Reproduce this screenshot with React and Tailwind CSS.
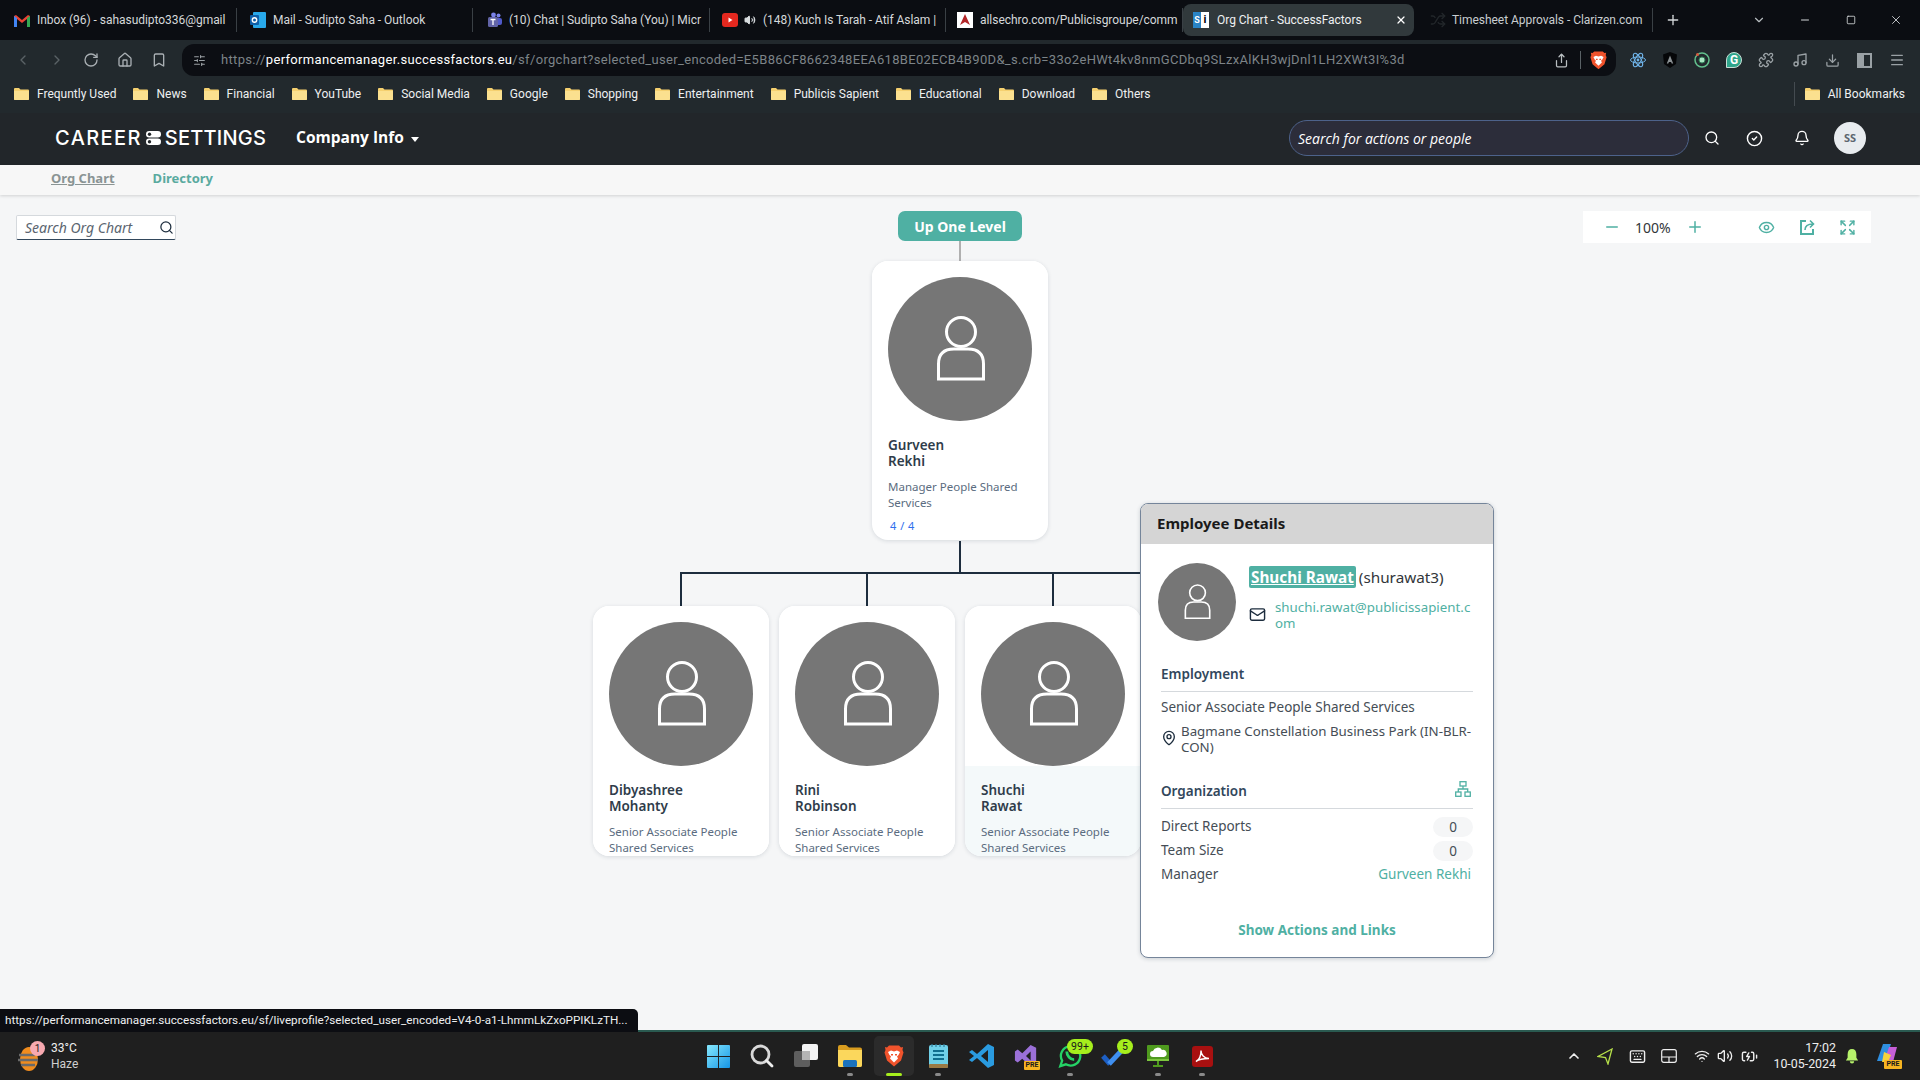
import {
  ChevronLeft, ChevronRight, RotateCw, Home, Bookmark, SlidersHorizontal, Share, Search, CircleCheck, Bell,
  Minus, Plus, Eye, Expand, Mail, MapPin, X, Square, ChevronDown, ChevronUp, Volume2,
  Puzzle, Music, Download, Menu, Keyboard, Wifi, BatteryCharging, Shuffle,
} from "lucide-react";

const chromeFont = { fontFamily: 'Roboto, sans-serif' };

function Folder() {
  return (
    <svg width="15" height="13" viewBox="0 0 15 13" className="shrink-0">
      <path d="M0 2a1 1 0 0 1 1-1h4l1.5 1.5H14a1 1 0 0 1 1 1V12a1 1 0 0 1-1 1H1a1 1 0 0 1-1-1z" fill="#f5d06f" />
      <path d="M0 4h15v8a1 1 0 0 1-1 1H1a1 1 0 0 1-1-1z" fill="#fbe08f" />
    </svg>
  );
}

function BraveLion({ size = 20 }) {
  return (
    <svg width={size} height={size * 1.1} viewBox="0 0 20 22">
      <path d="M5 0.5h10l2 2 2-.5-.5 3 1 2.5-2.5 8-7 6-7-6-2.5-8 1-2.5-.5-3 2 .5z" fill="#f0532c" />
      <path d="M4 7l3-1.5 3 1 3-1 3 1.5-1.5 3-1.5 1.5 1 2-4 4-4-4 1-2-1.5-1.5z" fill="#fff" />
      <path d="M7 9h2v1.5H7zM11 9h2v1.5h-2z" fill="#f0532c" />
    </svg>
  );
}

const tabs = [
  {
    w: "w-[236px]", title: "Inbox (96) - sahasudipto336@gmail", text: "w-[190px]", pad: "pl-[13px]",
    icon: (
      <svg width="16" height="13" viewBox="0 0 16 13">
        <path d="M0 2v11h3V5l5 4 5-4v8h3V2l-2-1-6 5-6-5z" fill="#ea4335" />
        <path d="M13 13h3V2l-3 2z" fill="#34a853" />
        <path d="M0 13h3V4L0 2z" fill="#4285f4" />
      </svg>
    ),
  },
  {
    w: "w-[236px]", title: "Mail - Sudipto Saha - Outlook", text: "w-[190px]", pad: "pl-[13px]",
    icon: (
      <svg width="16" height="16" viewBox="0 0 16 16">
        <rect x="3" width="13" height="16" rx="1" fill="#28a8ea" />
        <rect y="3" width="9" height="10" rx="1" fill="#0f5fa8" />
        <circle cx="4.5" cy="8" r="2.2" fill="none" stroke="#fff" strokeWidth="1.4" />
      </svg>
    ),
  },
  {
    w: "w-[237px]", title: "(10) Chat | Sudipto Saha (You) | Micr", text: "w-[190px]", pad: "pl-[13px]",
    icon: (
      <svg width="16" height="16" viewBox="0 0 16 16">
        <circle cx="12.5" cy="3.5" r="2" fill="#7b83eb" />
        <circle cx="7.5" cy="3" r="2.4" fill="#7b83eb" />
        <rect x="9" y="6" width="7" height="7" rx="2" fill="#5059c9" />
        <rect x="2" y="5" width="10" height="10" rx="1.5" fill="#6264a7" />
        <path d="M4.5 7.5h5M7 7.5V13" stroke="#fff" strokeWidth="1.3" />
      </svg>
    ),
  },
  {
    w: "w-[236px]", title: "(148) Kuch Is Tarah - Atif Aslam |", text: "w-[176px]", pad: "pl-[12px]", speaker: true,
    icon: (
      <svg width="16" height="14" viewBox="0 0 16 14">
        <rect width="16" height="14" rx="3" fill="#e5281f" />
        <path d="M6.5 4.5v5l4-2.5z" fill="#fff" />
      </svg>
    ),
  },
  {
    w: "w-[237px]", title: "allsechro.com/Publicisgroupe/comm", text: "w-[190px]", pad: "pl-[11px]",
    icon: (
      <svg width="16" height="16" viewBox="0 0 16 16">
        <rect width="16" height="16" fill="#fff" />
        <path d="M8 2l5 11-5-3-5 3z" fill="#b3262a" />
      </svg>
    ),
  },
];

function Tab({ tab }) {
  return (
    <div className={`${tab.w} ${tab.pad} h-[24px] flex items-center gap-[7px] border-r border-[#3a4045]`}>
      <div className="w-[16px] h-[16px] flex items-center justify-center shrink-0">{tab.icon}</div>
      {tab.speaker && <Volume2 size={12} fill="#d8dcdf" className="text-[#d8dcdf] shrink-0 ml-[-1px]" />}
      <div className={`${tab.text} whitespace-nowrap text-[12px] tracking-[-0.04px] text-[#d5d8da]`}>{tab.title}</div>
    </div>
  );
}

function TabStrip() {
  return (
    <div className="h-[40px] bg-[#0b0d12] flex items-center pl-[1px]" style={chromeFont}>
      {tabs.map((t) => (
        <Tab key={t.title} tab={t} />
      ))}
      <div className="w-[231px] h-[32px] rounded-[8px] bg-[#31393c] flex items-center pl-[10px] pr-[7px] gap-[8px] shrink-0">
        <div className="w-[16px] h-[16px] bg-white flex shrink-0">
          <div className="w-[8px] bg-[#2a84c6] text-[9px] font-bold leading-[16px] text-white text-center">S</div>
          <div className="w-[8px] text-[11px] font-bold leading-[15px] text-black text-center">i</div>
        </div>
        <div className="flex-1 whitespace-nowrap text-[12px] tracking-[-0.04px] text-[#eef0f1]">Org Chart - SuccessFactors</div>
        <X size={12} strokeWidth={2.5} className="text-white" />
      </div>
      <div className="w-[239px] h-[24px] flex items-center pl-[16px] gap-[6px] border-r border-[#3a4045]">
        <Shuffle size={16} className="text-[#23272b]" />
        <div className="text-[12px] tracking-[-0.04px] whitespace-nowrap text-[#c9cdd0]">Timesheet Approvals - Clarizen.com</div>
      </div>
      <Plus size={16} className="text-[#d5d8da] ml-[12px]" />
      <ChevronDown size={14} className="text-[#b9bec1] ml-[71px]" />
      <Minus size={12} className="text-[#d5d8da] ml-[33px]" />
      <Square size={10} className="text-[#d5d8da] ml-[35px]" />
      <X size={14} strokeWidth={1.5} className="text-[#d5d8da] ml-[33px]" />
    </div>
  );
}

function Toolbar() {
  return (
    <div className="h-[38px] bg-[#22292d] flex items-start pt-[4px] pl-[15px]" style={chromeFont}>
      <div className="flex items-center h-[32px] gap-[18px] w-[167px] text-[#a9afb3]">
        <ChevronLeft size={16} className="text-[#5a6266]" />
        <ChevronRight size={16} className="text-[#5a6266]" />
        <RotateCw size={16} />
        <Home size={16} />
        <Bookmark size={16} />
      </div>
      <div className="w-[1434px] h-[32px] rounded-[12px] bg-[#0c0e13] flex items-center pl-[11px] pr-[9px] text-[#7d8488]">
        <SlidersHorizontal size={13} className="text-[#9aa0a4]" />
        <div className="ml-[15px] text-[13px] tracking-[0.33px] whitespace-nowrap flex-1">
          https://<span className="text-white">performancemanager.successfactors.eu</span>
          /sf/orgchart?selected_user_encoded=E5B86CF8662348EEA618BE02ECB4B90D&amp;_s.crb=33o2eHWt4kv8nmGCDbq9SLzxAlKH3wjDnl1LH2XWt3I%3d
        </div>
        <Share size={15} className="text-[#b9bec1] mr-[2px]" />
        <div className="w-px h-[18px] bg-[#5a6266] mx-[9px]" />
        <BraveLion size={17} />
      </div>
      <div className="flex items-center h-[32px] gap-[16px] ml-[14px] text-[#9aa1a5]">
        <svg width="16" height="16" viewBox="-8 -8 16 16" fill="none" stroke="#6fb3e8" strokeWidth="1">
          <ellipse rx="7.5" ry="3" />
          <ellipse rx="7.5" ry="3" transform="rotate(60)" />
          <ellipse rx="7.5" ry="3" transform="rotate(120)" />
          <circle r="1.4" fill="#6fb3e8" stroke="none" />
        </svg>
        <svg width="16" height="16" viewBox="0 0 16 16">
          <path d="M8 0l7 2.5-1 9.5-6 4-6-4-1-9.5z" fill="#050608" />
          <path d="M8 3.5l-3.2 8h1.5l.6-1.6h2.2l.6 1.6h1.5z" fill="#8c9295" />
        </svg>
        <svg width="16" height="16" viewBox="0 0 16 16" fill="none">
          <circle cx="8" cy="8" r="7" stroke="#62c08d" strokeWidth="1.5" />
          <circle cx="8" cy="8" r="3" fill="#a8e4c2" stroke="#2f7d55" />
          <circle cx="3.5" cy="2.5" r="1.5" fill="#d9583c" />
        </svg>
        <div className="w-[16px] h-[16px] rounded-full rounded-bl-[2px] bg-[#2fa58b] border border-[#c8ded6] text-white text-[12px] font-bold leading-[14px] text-center">G</div>
        <Puzzle size={16} />
        <Music size={16} className="ml-[2px]" />
        <Download size={15} className="ml-[1px]" />
        <div className="w-[15px] h-[15px] ml-[1px] border-2 border-[#9aa1a5] flex">
          <div className="w-[5px] bg-[#9aa1a5]" />
        </div>
        <Menu size={16} className="ml-[1px]" />
      </div>
    </div>
  );
}

const bookmarks = ["Frequntly Used", "News", "Financial", "YouTube", "Social Media", "Google", "Shopping", "Entertainment", "Publicis Sapient", "Educational", "Download", "Others"];

function BookmarksBar() {
  return (
    <div className="h-[35px] bg-[#22292d] flex items-center pl-[14px] pr-[15px] pb-[4px] justify-between" style={chromeFont}>
      <div className="flex items-center gap-[17px]">
        {bookmarks.map((b) => (
          <div key={b} className="flex items-center gap-[8px] text-[12px] text-[#eef0f1] whitespace-nowrap">
            <Folder />
            {b}
          </div>
        ))}
      </div>
      <div className="flex items-center gap-[8px] text-[12px] text-[#eef0f1] border-l border-[#444b50] pl-[10px] h-[24px]">
        <Folder />
        All Bookmarks
      </div>
    </div>
  );
}

function AppHeader() {
  return (
    <div className="h-[52px] bg-[#22262a] flex items-center pb-[2px] text-white" style={{ fontFamily: '"Open Sans", sans-serif' }}>
      <div className="ml-[55px] flex items-center text-[20px] font-medium leading-none" style={{ fontFamily: "Inter, sans-serif" }}>
        <span className="tracking-[1.4px]">CAREER</span>
        <svg width="15" height="14" viewBox="0 0 15 14" className="mx-[4px]">
          <rect width="15" height="6.5" rx="3.25" fill="#fff" />
          <rect y="7.5" width="15" height="6.5" rx="3.25" fill="#fff" />
          <circle cx="3.5" cy="3.25" r="1.7" fill="#22262a" />
          <circle cx="3.5" cy="10.75" r="1.7" fill="#22262a" />
        </svg>
        <span className="tracking-[0.2px]">SETTINGS</span>
      </div>
      <div className="ml-[30px] flex items-center gap-[7px] text-[15.5px] font-bold">
        Company Info
        <div className="w-0 h-0 border-x-[4px] border-x-transparent border-t-[5px] border-t-white mt-[2px]" />
      </div>
      <div className="ml-auto w-[400px] h-[36px] rounded-full bg-[#2c2d3a] border border-[#4d628a] flex items-center pl-[8px] text-[14px] italic">
        Search for actions or people
      </div>
      <Search size={16} className="ml-[15px]" />
      <CircleCheck size={17} className="ml-[26px]" />
      <Bell size={16} fill="none" className="ml-[31px]" />
      <div className="ml-[24px] mr-[54px] w-[32px] h-[32px] rounded-full bg-[#e8ecef] text-[#5c6670] text-[11px] font-bold flex items-center justify-center">
        SS
      </div>
    </div>
  );
}

function PersonAvatar({ className }) {
  return (
    <svg viewBox="0 0 144 144" className={className}>
      <circle cx="72" cy="72" r="72" fill="#767676" />
      <circle cx="73" cy="55" r="14.5" fill="none" stroke="#fff" strokeWidth="3" />
      <path d="M50.5 102 V87 Q50.5 72 66 72 H80 Q95.5 72 95.5 87 V102 Z" fill="none" stroke="#fff" strokeWidth="3" />
    </svg>
  );
}

function OrgCard({ first, last, title, position, count, selected }) {
  return (
    <div className={`absolute ${position} w-[176px] rounded-[16px] bg-white shadow-[0_1px_4px_rgba(30,50,70,0.14)] overflow-hidden`}>
      <div className="px-[16px] pt-[16px] bg-white">
        <PersonAvatar className="w-[144px] h-[144px] block" />
      </div>
      <div className={`px-[16px] pt-[16px] h-[90px] ${selected ? "bg-[#f4f9fa]" : "bg-white"}`}>
        <div className="text-[13.5px] font-semibold leading-[16px] text-[#2f3c4a]">
          {first}
          <br />
          {last}
        </div>
        <div className="mt-[10px] text-[11.5px] leading-[16px] text-[#5b6c80]">{title}</div>
      </div>
      {count && <div className="px-[18px] pb-[6px] pt-[7px] text-[11px] leading-[16px] text-[#2f6fed] tracking-[0.5px]">{count}</div>}
    </div>
  );
}

function EmployeePopover() {
  return (
    <div className="absolute left-[1140px] top-[308px] w-[354px] h-[455px] rounded-[8px] bg-white border border-[#75859a] shadow-[0_1px_4px_rgba(30,50,70,0.2)] overflow-hidden">
      <div className="h-[40px] bg-[#d5d5d5] pl-[16px] pb-[2px] flex items-center text-[15px] font-bold text-[#1a1a1a]">Employee Details</div>
      <div className="flex pt-[19px] pl-[17px]">
        <PersonAvatar className="w-[78px] h-[78px] shrink-0" />
        <div className="ml-[13px] w-[225px]">
          <div className="flex items-center h-[22px] mt-[3px] whitespace-nowrap text-[15.3px] text-[#32363a]">
            <span className="bg-[#4fb0a3] text-white font-bold underline px-[2px] rounded-[2px] leading-[22px]">Shuchi Rawat</span>
            <span className="ml-[3px]">(shurawat3)</span>
          </div>
          <div className="flex mt-[11px]">
            <Mail size={17} className="text-[#1d2d3e] shrink-0 mt-[7px]" />
            <div className="ml-[9px] w-[196px] break-all text-[13.3px] leading-[16px] text-[#4fb0a3]">shuchi.rawat@publicissapient.com</div>
          </div>
        </div>
      </div>
      <div className="px-[20px] text-[13.5px] text-[#454d55]">
        <div className="mt-[23px] pb-[7px] border-b border-[#d5d9dd] font-semibold text-[#32475c]">Employment</div>
        <div className="mt-[6px] leading-[18px]">Senior Associate People Shared Services</div>
        <div className="flex mt-[7px] leading-[16px]">
          <MapPin size={16} className="text-[#1d2d3e] shrink-0 mt-[7px]" />
          <div className="ml-[4px] mr-[-3px] text-[13.3px]">Bagmane Constellation Business Park (IN-BLR-CON)</div>
        </div>
        <div className="mt-[26px] pb-[6px] border-b border-[#d5d9dd] font-semibold text-[#32475c] flex items-center justify-between">
          Organization
          <svg width="16" height="16" viewBox="0 0 16 16" fill="none" stroke="#4fb0a3" strokeWidth="1.3" className="mr-[2px] mt-[-4px]">
            <rect x="5" y="0.7" width="6" height="4.3" />
            <rect x="0.7" y="11" width="5.3" height="4.3" />
            <rect x="10" y="11" width="5.3" height="4.3" />
            <path d="M8 5v3M3.3 11V8h9.4v3" />
          </svg>
        </div>
        <div className="mt-[8px] flex items-center justify-between h-[20px]">
          Direct Reports
          <span className="w-[40px] h-[20px] rounded-full bg-[#f5f6f7] text-center leading-[20px]">0</span>
        </div>
        <div className="mt-[4px] flex items-center justify-between h-[20px]">
          Team Size
          <span className="w-[40px] h-[20px] rounded-full bg-[#f5f6f7] text-center leading-[20px]">0</span>
        </div>
        <div className="mt-[4px] flex items-center justify-between h-[20px]">
          Manager
          <span className="text-[#4fb0a3] mr-[2px]">Gurveen Rekhi</span>
        </div>
        <div className="mt-[35px] text-center font-bold text-[#4fb0a3]">Show Actions and Links</div>
      </div>
    </div>
  );
}

function OrgChart() {
  return (
    <div className="relative flex-1 bg-[#f5f6f7]" style={{ fontFamily: '"Noto Sans", sans-serif' }}>
      <div className="flex items-start justify-between pl-[16px] pr-[49px] pt-[16px]">
        <div className="mt-[4px] w-[160px] h-[25px] bg-white border border-[#d5d9dd] border-b-[#32475c] rounded-[2px] flex items-center justify-between pl-[8px] pr-[1px] italic text-[14px] text-[#5b6570]">
          Search Org Chart
          <Search size={15} className="text-[#1d2d3e]" />
        </div>
        <div className="w-[288px] h-[32px] bg-white flex items-center text-[#4fb0a3]">
          <Minus size={18} strokeWidth={2} className="ml-[20px]" />
          <span className="ml-[14px] text-[14px] text-[#32363a]">100%</span>
          <Plus size={18} strokeWidth={2} className="ml-[15px]" />
          <Eye size={17} className="ml-[54px]" />
          <svg width="16" height="16" viewBox="0 0 16 16" fill="none" stroke="#4fb0a3" strokeWidth="2" className="ml-[24px]">
            <path d="M7 2H2v13h12v-5" />
            <path d="M6 11c0-4 2-6 8-6M11 1.5l3.5 3.5L11 8.5" strokeWidth="1.6" />
          </svg>
          <Expand size={17} className="ml-[24px]" />
        </div>
      </div>

      <div className="absolute left-[898px] top-[16px] w-[124px] h-[30px] rounded-[7px] bg-[#4fb0a3] text-white text-[14px] font-bold flex items-center justify-center">
        Up One Level
      </div>
      <div className="absolute left-[959px] top-[46px] w-[2px] h-[20px] bg-[#b0b0b0]" />
      <OrgCard first="Gurveen" last="Rekhi" title="Manager People Shared Services" position="left-[872px] top-[66px]" count="4 / 4" />

      <div className="absolute left-[959px] top-[346px] w-[2px] h-[32px] bg-[#1d2d3e]" />
      <div className="absolute left-[680px] top-[377px] w-[460px] h-[2px] bg-[#1d2d3e]" />
      <div className="absolute left-[680px] top-[377px] w-[2px] h-[34px] bg-[#1d2d3e]" />
      <div className="absolute left-[866px] top-[377px] w-[2px] h-[34px] bg-[#1d2d3e]" />
      <div className="absolute left-[1052px] top-[377px] w-[2px] h-[34px] bg-[#1d2d3e]" />

      <OrgCard first="Dibyashree" last="Mohanty" title="Senior Associate People Shared Services" position="left-[593px] top-[411px]" />
      <OrgCard first="Rini" last="Robinson" title="Senior Associate People Shared Services" position="left-[779px] top-[411px]" />
      <OrgCard first="Shuchi" last="Rawat" title="Senior Associate People Shared Services" position="left-[965px] top-[411px]" selected />

      <EmployeePopover />

      <div className="absolute left-0 bottom-[-2px] w-[638px] h-[23px] bg-[#0c0d12] rounded-tr-[5px] pl-[5px] flex items-center text-[11.7px] text-[#eef0f1] whitespace-nowrap" style={chromeFont}>
        https://performancemanager.successfactors.eu/sf/liveprofile?selected_user_encoded=V4-0-a1-LhmmLkZxoPPIKLzTH...
      </div>
    </div>
  );
}

function Dot({ color = "bg-[#8a8a8a]", wide }) {
  return <div className={`absolute bottom-[2px] left-1/2 -translate-x-1/2 rounded-full h-[3px] ${wide ? "w-[16px]" : "w-[6px]"} ${color}`} />;
}

function Badge({ children, wide }) {
  return (
    <div className={`absolute top-[5px] ${wide ? "right-[-1px] w-[26px]" : "right-[3px] w-[16px]"} h-[15px] rounded-[8px] bg-[#a6ee1d] text-[#1a1a1a] text-[10.5px] leading-[15px] text-center`}>
      {children}
    </div>
  );
}

const dockIcons = [
  {
    name: "start",
    el: (
      <svg width="23" height="23" viewBox="0 0 24 24">
        <defs>
          <linearGradient id="winBlue" x1="0" y1="0" x2="1" y2="1">
            <stop offset="0" stopColor="#86e8fd" />
            <stop offset="1" stopColor="#1595e6" />
          </linearGradient>
        </defs>
        <path d="M1 0h10.5v11.5H0V1a1 1 0 0 1 1-1zM12.5 0H23a1 1 0 0 1 1 1v10.5H12.5zM0 12.5h11.5V24H1a1 1 0 0 1-1-1zM12.5 12.5H24V23a1 1 0 0 1-1 1H12.5z" fill="url(#winBlue)" />
      </svg>
    ),
  },
  {
    name: "search",
    el: (
      <svg width="24" height="24" viewBox="0 0 24 24" fill="none">
        <circle cx="10.5" cy="10.5" r="8.5" stroke="#d8d8d8" strokeWidth="2.8" />
        <path d="M16.5 16.5L22 22" stroke="#eeeeee" strokeWidth="2.8" strokeLinecap="round" />
      </svg>
    ),
  },
  {
    name: "tasks",
    el: (
      <svg width="24" height="24" viewBox="0 0 24 24">
        <rect x="8" y="0" width="16" height="16" rx="2" fill="#f4f4f4" />
        <rect x="0" y="7" width="16" height="16" rx="2" fill="#5e5e5e" />
        <rect x="8" y="7" width="8" height="9" fill="#b5b5b5" />
      </svg>
    ),
  },
  {
    name: "files", dot: true,
    el: (
      <svg width="24" height="22" viewBox="0 0 24 22">
        <path d="M0 2a2 2 0 0 1 2-2h6l3 2.5h11a2 2 0 0 1 2 2V20a2 2 0 0 1-2 2H2a2 2 0 0 1-2-2z" fill="#d99d1f" />
        <path d="M0 5h24v15a2 2 0 0 1-2 2H2a2 2 0 0 1-2-2z" fill="#fbd75c" />
        <rect x="5" y="15" width="14" height="7" rx="1.5" fill="#1a72bd" />
      </svg>
    ),
  },
  { name: "brave", active: true, el: <BraveLion size={20} /> },
  {
    name: "notes", dot: true,
    el: (
      <svg width="19" height="24" viewBox="0 0 19 24">
        <rect y="1" width="19" height="23" rx="2" fill="#6fd0e8" />
        <rect y="20" width="19" height="4" rx="1" fill="#9b7a45" />
        <path d="M4 7h11M4 11h11M4 15h11" stroke="#0f6f8f" strokeWidth="2" />
        <path d="M3 0v3M7 0v3M11 0v3M15 0v3" stroke="#2f7f9c" strokeWidth="1.2" />
      </svg>
    ),
  },
  {
    name: "vscode",
    el: (
      <svg width="26" height="26" viewBox="0 0 26 26">
        <path d="M19 1l6 3v18l-6 3-11-10-5 4-3-2 5-4-5-4 3-2 5 4z" fill="#2a9be0" />
        <path d="M19 7v12l-7-6z" fill="#1f1f1f" />
      </svg>
    ),
  },
  {
    name: "vs",
    el: (
      <div className="relative w-[24px] h-[24px]">
        <svg width="24" height="24" viewBox="0 0 26 26">
          <path d="M18 1l6 3v18l-6 3-9-9-5 4-3-2v-10l3-2 5 4z" fill="#9b70d8" />
          <path d="M18 8v10l-5-5z" fill="#1f1f1f" />
        </svg>
        <div className="absolute right-[-2px] bottom-[-2px] w-[16px] h-[9px] rounded-[1px] bg-[#f7b521] text-[7px] font-bold leading-[9px] text-center text-[#1a1a1a]">PRE</div>
      </div>
    ),
  },
  {
    name: "whatsapp", dot: true, badge: "99+", wide: true,
    el: (
      <svg width="24" height="24" viewBox="0 0 25 26" fill="none">
        <path d="M2 24l2-6a10.5 10.5 0 1 1 4 4z" stroke="#25d366" strokeWidth="2.5" />
        <path d="M9 8c0 5 4 9 8 9" stroke="#25d366" strokeWidth="3" />
      </svg>
    ),
  },
  {
    name: "todo", badge: "5",
    el: (
      <svg width="26" height="22" viewBox="0 0 26 22" fill="none">
        <path d="M2 11l7 8" stroke="#1d5fc4" strokeWidth="5" />
        <path d="M8 19L23 3" stroke="#3f8ff0" strokeWidth="5" />
      </svg>
    ),
  },
  {
    name: "presenter", dot: true,
    el: (
      <svg width="22" height="23" viewBox="0 0 22 23">
        <rect width="22" height="16" rx="1" fill="#4f9a1e" />
        <path d="M6 12a3 3 0 0 1 0-6 5 5 0 0 1 9-1 3.5 3.5 0 0 1 2 7z" fill="#fff" />
        <rect y="14" width="22" height="2" fill="#7cc63e" />
        <path d="M10 16h2v4h4v2H6v-2h4z" fill="#4f9a1e" />
      </svg>
    ),
  },
  {
    name: "acrobat", dot: true,
    el: (
      <svg width="21" height="21" viewBox="0 0 21 21" fill="none">
        <rect width="21" height="21" rx="3" fill="#a81010" />
        <path d="M4 15.5c3-1.5 5-6 5-11 0 4 3 8 8 8-4 0-9 0-13 3z" stroke="#fff" strokeWidth="1.4" />
      </svg>
    ),
  },
];

function DockButton({ item }) {
  return (
    <div className="relative w-[44px] h-[44px] flex items-center justify-center">
      {item.active && <div className="absolute inset-[2px] rounded-[5px] bg-[#2b2b2b]" />}
      <div className="relative flex">{item.el}</div>
      {item.badge && <Badge wide={item.wide}>{item.badge}</Badge>}
      {item.dot && <Dot />}
      {item.active && <Dot wide color="bg-[#a6ee1d]" />}
    </div>
  );
}

function Taskbar() {
  return (
    <div className="h-[50px] bg-[#1f1f1f] border-t-2 border-[#2a5a50] flex items-center text-[#eeeeee]" style={chromeFont}>
      <div className="w-[696px] flex items-center pl-[18px] shrink-0">
        <div className="relative w-[24px] h-[36px]">
          <svg width="22" height="26" viewBox="0 0 22 26" className="absolute top-[8px] left-0">
            <ellipse cx="11" cy="13" rx="9" ry="12" fill="#f08c1e" />
            <path d="M1 9h16M0 14h20M3 19h14" stroke="#6a6a6a" strokeWidth="2.4" />
          </svg>
          <div className="absolute left-[12px] top-[3px] w-[15px] h-[15px] rounded-full bg-[#f7a9b0] text-[#1a1a1a] text-[10px] leading-[15px] text-center">1</div>
        </div>
        <div className="ml-[9px] text-[12px] leading-[16px]">
          <div>33°C</div>
          <div className="text-[#cfcfcf]">Haze</div>
        </div>
      </div>
      <div className="flex items-center">
        {dockIcons.map((d) => (
          <DockButton key={d.name} item={d} />
        ))}
      </div>
      <div className="ml-auto flex items-center text-[#eeeeee]">
        <ChevronUp size={16} strokeWidth={2.5} />
        <svg width="16" height="17" viewBox="0 0 16 17" fill="none" stroke="#b6e04a" strokeWidth="1.3" className="ml-[15px]">
          <path d="M15 1L1 8.5l7.5 1L11 16z" />
        </svg>
        <Keyboard size={17} className="ml-[16px]" />
        <svg width="16" height="14" viewBox="0 0 16 14" fill="none" className="ml-[15px]">
          <rect x="0.7" y="0.7" width="14.6" height="12.6" rx="2" stroke="#eee" strokeWidth="1.2" />
          <path d="M1 8h14M8 8v5" stroke="#eee" strokeWidth="1.2" />
        </svg>
        <Wifi size={16} className="ml-[17px]" />
        <Volume2 size={16} className="ml-[7px]" />
        <BatteryCharging size={17} className="ml-[8px]" />
        <div className="ml-[13px] w-[65px] text-right text-[12.4px] leading-[16px] whitespace-nowrap">
          <div>17:02</div>
          <div>10-05-2024</div>
        </div>
        <svg width="14" height="16" viewBox="0 0 16 18" className="ml-[9px]">
          <path d="M8 1c3 0 5 2 5 6v4l2 3H1l2-3V7c0-4 2-6 5-6z" fill="#b6f26a" />
          <path d="M5.5 15h5a2.5 2.5 0 0 1-5 0z" fill="#b6f26a" />
        </svg>
        <div className="relative ml-[16px] mr-[21px] w-[24px] h-[26px]">
          <svg width="24" height="22" viewBox="0 0 24 22">
            <path d="M8 1h8l-6 17H2z" fill="#2f8fe0" />
            <path d="M14 4h8l-4 15h-9z" fill="#c65fd8" />
            <path d="M9 9l7 3-3 7H7z" fill="#f6d23c" />
          </svg>
          <div className="absolute right-[-3px] bottom-[0px] w-[18px] h-[9px] rounded-[1px] bg-[#f7b521] text-[#1a1a1a] text-[7px] font-bold leading-[9px] text-center">PRE</div>
        </div>
      </div>
    </div>
  );
}

export default function App() {
  return (
    <div className="w-[1920px] h-[1080px] flex flex-col overflow-hidden">
      <TabStrip />
      <Toolbar />
      <BookmarksBar />
      <AppHeader />
      <div className="h-[30px] bg-[#f7f7f7] flex items-center pb-[2px] shadow-[0_1px_3px_rgba(0,0,0,0.15)] relative z-10 text-[13px] font-bold" style={{ fontFamily: '"Noto Sans", sans-serif' }}>
        <span className="ml-[51px] text-[#8a9494] underline">Org Chart</span>
        <span className="ml-[38px] text-[#5aaa9f]">Directory</span>
      </div>
      <OrgChart />
      <Taskbar />
    </div>
  );
}
